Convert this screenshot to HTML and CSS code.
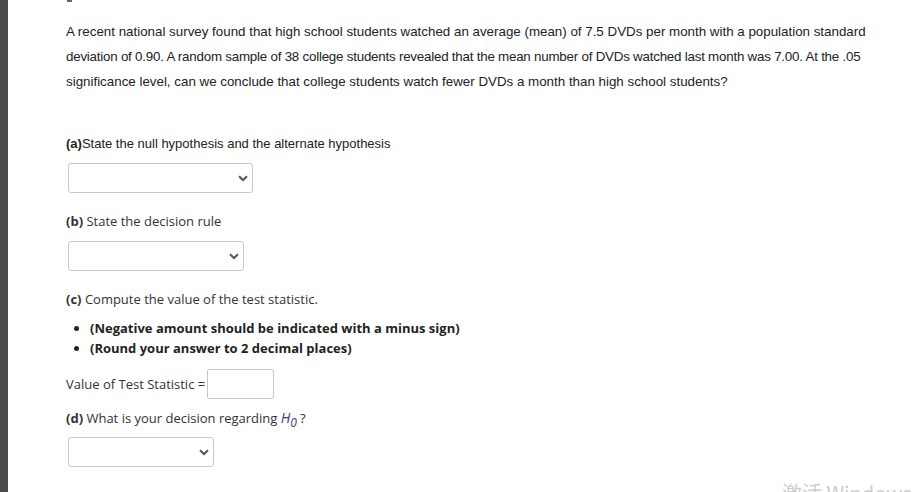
FILE: index.html
```html
<!DOCTYPE html>
<html>
<head>
<meta charset="utf-8">
<link rel="stylesheet" href="styles.css">
</head>
<body>
<div class="bar"></div>
<main class="main">
  <div class="mark"></div>
  <p class="intro">A recent national survey found that high school students watched an average (mean) of 7.5 DVDs per month with a population standard<br><span class="tight">deviation of 0.90. A random sample of 38 college students revealed that the mean number of DVDs watched last month was 7.00. At the .05</span><br>significance level, can we conclude that college students watch fewer DVDs a month than high school students?</p>

  <div class="q-a"><b>(a)</b>State the null hypothesis and the alternate hypothesis</div>
  <div class="sel sel-a"><select></select><svg class="chev" width="10" height="7" viewBox="0 0 10 7"><path d="M1 1.2 L5 5 L9 1.2" fill="none" stroke="#555" stroke-width="2"/></svg></div>

  <div class="q"><b>(b)</b> State the decision rule</div>
  <div class="sel sel-b"><select></select><svg class="chev" width="10" height="7" viewBox="0 0 10 7"><path d="M1 1.2 L5 5 L9 1.2" fill="none" stroke="#555" stroke-width="2"/></svg></div>

  <div class="q"><b>(c)</b> Compute the value of the test statistic.</div>
  <ul class="notes">
    <li>(Negative amount should be indicated with a minus sign)</li>
    <li>(Round your answer to 2 decimal places)</li>
  </ul>
  <div class="value-row"><span>Value of Test Statistic =</span><input class="val" type="text"></div>

  <div class="q q-d"><b>(d)</b> What is your decision regarding <i class="h0">H<sub>0</sub></i>?</div>
  <div class="sel sel-d"><select></select><svg class="chev" width="10" height="7" viewBox="0 0 10 7"><path d="M1 1.2 L5 5 L9 1.2" fill="none" stroke="#555" stroke-width="2"/></svg></div>
</main>
<div class="watermark">激活 Windows</div>
</body>
</html>
```

FILE: styles.css
```css
html, body {
  margin: 0;
  padding: 0;
  background: #fff;
}
body {
  display: flex;
  min-height: 492px;
  overflow: hidden;
  position: relative;
}
.bar {
  width: 8px;
  flex: none;
  background: #4b4b4b;
}
.main {
  flex: 1;
  padding-left: 58px;
  font-family: "Open Sans", sans-serif;
  font-size: 13px;
  color: #333;
}
.mark {
  width: 5px;
  height: 2px;
  margin-left: 1px;
  background: #666;
}
.intro {
  font-family: "Liberation Sans", Arial, sans-serif;
  font-size: 13.35px;
  line-height: 25px;
  color: #222;
  margin: 17px 0 0 0;
  white-space: nowrap;
}
.tight {
  letter-spacing: -0.22px;
}
.q-a {
  font-family: "Liberation Sans", Arial, sans-serif;
  color: #222;
  line-height: 20px;
  margin-top: 40px;
}
.q {
  line-height: 20px;
  margin-top: 18px;
}
.q b { font-weight: 700; }
.sel {
  position: relative;
  margin-left: 2px;
  height: 30px;
  margin-top: 9px;
}
.sel select {
  appearance: none;
  -webkit-appearance: none;
  box-sizing: border-box;
  width: 100%;
  height: 30px;
  border: 1px solid #c8c8c8;
  border-radius: 3px;
  background: #fff;
  margin: 0;
  display: block;
}
.sel-a { width: 185px; }
.sel-b { width: 176px; margin-top: 10px; }
.sel-d { width: 146px; }
.chev {
  position: absolute;
  right: 5px;
  top: 12px;
  pointer-events: none;
}
.notes {
  margin: 9px 0 0 0;
  padding-left: 24px;
  font-weight: 700;
  color: #222;
  line-height: 20px;
}
.value-row {
  display: flex;
  align-items: center;
  gap: 2px;
  margin-top: 11px;
  line-height: 20px;
}
.val {
  box-sizing: border-box;
  width: 67px;
  height: 30px;
  border: 1px solid #c8c8c8;
  border-radius: 2px;
  margin: 0;
}
.q-d { margin-top: 9px; }
.h0 {
  color: #3b3b7a;
  font-size: 14px;
  margin-right: 3px;
}
.h0 sub {
  font-size: 12px;
  line-height: 0;
  vertical-align: -4px;
}
.watermark {
  position: absolute;
  left: 782px;
  top: 478px;
  font-family: "Noto Sans CJK SC", "Liberation Sans", sans-serif;
  font-size: 20px;
  color: rgba(160,160,160,0.55);
  white-space: nowrap;
}
```
